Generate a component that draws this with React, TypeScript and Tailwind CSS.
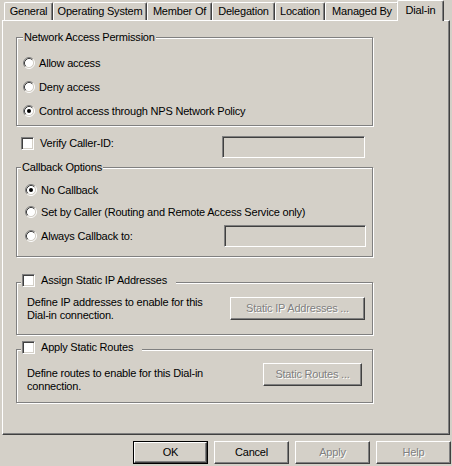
import type { ReactNode } from "react";

const raised = "border-t border-l border-t-white border-l-white border-r border-b border-r-[#404040] border-b-[#404040] shadow-[inset_-1px_-1px_0_#808080]";
const sunken = "border-t border-l border-t-[#808080] border-l-[#808080] border-r border-b border-r-white border-b-white shadow-[inset_1px_1px_0_#404040,inset_-1px_-1px_0_#d4d0c8]";
const etched = "border border-[#808080] shadow-[inset_1px_1px_0_#fff,1px_1px_0_#fff]";
const disabledText = "text-[#808080] [text-shadow:1px_1px_0_#fff]";

const tabs = [
  { label: "General", w: "w-[49px]" },
  { label: "Operating System", w: "w-[94px]" },
  { label: "Member Of", w: "w-[65px]" },
  { label: "Delegation", w: "w-[63px]" },
  { label: "Location", w: "w-[50px]" },
  { label: "Managed By", w: "w-[74px]" },
];

function Radio({ on }: { on?: boolean }) {
  return (
    <svg width="12" height="12" viewBox="0 0 12 12" className="shrink-0">
      <circle cx="6" cy="6" r="4.5" fill="#fff" />
      <path d="M2.11 9.89 A5.5 5.5 0 0 1 9.89 2.11" fill="none" stroke="#808080" />
      <path d="M9.89 2.11 A5.5 5.5 0 0 1 2.11 9.89" fill="none" stroke="#fff" />
      <path d="M2.82 9.18 A4.5 4.5 0 0 1 9.18 2.82" fill="none" stroke="#404040" />
      <path d="M9.18 2.82 A4.5 4.5 0 0 1 2.82 9.18" fill="none" stroke="#d4d0c8" />
      {on && <circle cx="6" cy="6" r="2" fill="#000" />}
    </svg>
  );
}

function Check() {
  return <div className={`w-[13px] h-[13px] shrink-0 bg-white ${sunken}`} />;
}

function TextBox({ w }: { w: string }) {
  return <div className={`${w} h-[22px] bg-[#d4d0c8] ${sunken}`} />;
}

function RadioRow({ on, children, h }: { on?: boolean; children: ReactNode; h: string }) {
  return (
    <div className={`flex items-center gap-[4px] ${h}`}>
      <Radio on={on} />
      <span>{children}</span>
    </div>
  );
}

function CheckGroup({ title, h, mt, children }: { title: string; h: string; mt: string; children: ReactNode }) {
  return (
    <div className={`relative w-[357px] ${h} ${mt} ${etched}`}>
      <div className="absolute left-[4px] -top-[10px] flex items-center gap-[6px] bg-[#d4d0c8] pl-[1px] pr-[9px] h-[14px]">
        <Check />
        <span>{title}</span>
      </div>
      {children}
    </div>
  );
}

export default function App() {
  return (
    <div className="w-[452px] h-[466px] bg-[#d4d0c8] text-[11px] leading-[13px] tracking-[-0.2px] text-black font-['Liberation_Sans',Arial,sans-serif] overflow-hidden select-none">
      {/* Tabs */}
      <div className="flex items-end h-[20px] pl-[4px]">
        {tabs.map((t) => (
          <div
            key={t.label}
            className={`${t.w} h-[18px] flex items-center justify-center rounded-t-[2px] ${raised} border-b-0 shadow-[inset_-1px_0_0_#808080]`}
          >
            {t.label}
          </div>
        ))}
        <div className="relative z-10 -ml-[2px] w-[47px] h-[21px] -mb-[1px] pb-[2px] flex items-center justify-center bg-[#d4d0c8] rounded-t-[2px] border-t border-l border-t-white border-l-white border-r border-r-[#404040] shadow-[inset_-1px_0_0_#808080]">
          Dial-in
        </div>
      </div>

      {/* Page */}
      <div className={`ml-[2px] w-[448px] h-[415px] pl-[13px] flex flex-col items-start ${raised}`}>
        <div className={`relative mt-[16px] w-[357px] h-[89px] ${etched}`}>
          <span className="absolute left-[6px] -top-[7px] px-[1px] bg-[#d4d0c8]">Network Access Permission</span>
          <div className="pt-[13px] pl-[6px]">
            <RadioRow h="h-[24px]">Allow access</RadioRow>
            <RadioRow h="h-[24px]">Deny access</RadioRow>
            <RadioRow h="h-[24px]" on>
              Control access through NPS Network Policy
            </RadioRow>
          </div>
        </div>

        <div className="mt-[10px] w-[357px] h-[22px] flex items-start pl-[5px]">
          <div className="mt-[1px] flex items-center gap-[6px]">
            <Check />
            <span>Verify Caller-ID:</span>
          </div>
          <div className="ml-auto mr-[8px]">
            <TextBox w="w-[143px]" />
          </div>
        </div>

        <div className={`relative mt-[9px] w-[357px] h-[90px] ${etched}`}>
          <span className="absolute left-[4px] -top-[7px] px-[1px] bg-[#d4d0c8]">Callback Options</span>
          <div className="pt-[11px] pl-[8px] pr-[6px]">
            <RadioRow h="h-[22px]" on>
              No Callback
            </RadioRow>
            <RadioRow h="h-[22px]">Set by Caller (Routing and Remote Access Service only)</RadioRow>
            <div className="mt-[2px] flex items-center h-[22px]">
              <div className="flex items-center gap-[4px]">
                <Radio />
                <span>Always Callback to:</span>
              </div>
              <div className="ml-auto">
                <TextBox w="w-[142px]" />
              </div>
            </div>
          </div>
        </div>

        <CheckGroup title="Assign Static IP Addresses" h="h-[53px]" mt="mt-[25px]">
          <div className="flex items-start pt-[13px] pl-[10px] pr-[7px]">
            <span>
              Define IP addresses to enable for this
              <br />
              Dial-in connection.
            </span>
            <div className={`ml-auto mt-[1px] w-[135px] h-[23px] flex items-center justify-center ${raised} ${disabledText}`}>
              Static IP Addresses ...
            </div>
          </div>
        </CheckGroup>

        <CheckGroup title="Apply Static Routes" h="h-[54px]" mt="mt-[14px]">
          <div className="flex items-start pt-[13px] pl-[10px] pr-[10px]">
            <span className="mt-[4px]">
              Define routes to enable for this Dial-in
              <br />
              connection.
            </span>
            <div className={`ml-auto w-[99px] h-[23px] flex items-center justify-center ${raised} ${disabledText}`}>
              Static Routes ...
            </div>
          </div>
        </CheckGroup>
      </div>

      {/* Buttons */}
      <div className="mt-[6px] flex justify-end gap-[6px] pr-[1px]">
        <div className="w-[75px] h-[23px] border border-black">
          <div className={`w-full h-full flex items-center justify-center ${raised}`}>OK</div>
        </div>
        <div className={`w-[75px] h-[23px] flex items-center justify-center ${raised}`}>Cancel</div>
        <div className={`w-[75px] h-[23px] flex items-center justify-center ${raised} ${disabledText}`}>Apply</div>
        <div className={`w-[75px] h-[23px] flex items-center justify-center ${raised} ${disabledText}`}>Help</div>
      </div>
    </div>
  );
}
